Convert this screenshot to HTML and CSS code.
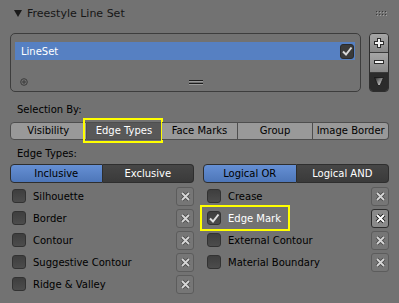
FILE: index.html
```html
<!DOCTYPE html>
<html lang="en">

<head>
    <meta charset="UTF-8">
    <title>Freestyle Line Set</title>
    <link rel="stylesheet" href="styles.css">
</head>

<body>
    <div class="panel">
        <div class="head">
            <svg class="caret" width="8" height="7" viewBox="0 0 8 7"><path d="M0 0H8L4 7Z" fill="#1a1a1a"/></svg>
            <span class="title">Freestyle Line Set</span>
            <svg class="grip" width="11" height="5" viewBox="0 0 11 5">
                <g fill="#3a3a3a"><rect x="0" y="0" width="1" height="1"/><rect x="3" y="0" width="1" height="1"/><rect x="6" y="0" width="1" height="1"/><rect x="9" y="0" width="1" height="1"/><rect x="0" y="3" width="1" height="1"/><rect x="3" y="3" width="1" height="1"/><rect x="6" y="3" width="1" height="1"/><rect x="9" y="3" width="1" height="1"/></g>
                <g fill="#a0a0a0"><rect x="1" y="1" width="1" height="1"/><rect x="4" y="1" width="1" height="1"/><rect x="7" y="1" width="1" height="1"/><rect x="10" y="1" width="1" height="1"/><rect x="1" y="4" width="1" height="1"/><rect x="4" y="4" width="1" height="1"/><rect x="7" y="4" width="1" height="1"/><rect x="10" y="4" width="1" height="1"/></g>
            </svg>
        </div>

        <div class="list-wrap">
            <div class="list">
                <div class="list-item">
                    <span>LineSet</span>
                    <span class="chk on">
                        <svg width="12" height="12" viewBox="0 0 12 12"><path d="M2 6.5L5 9.5L10.5 2.5" fill="none" stroke="#d8d8d8" stroke-width="2"/></svg>
                    </span>
                </div>
                <div class="list-foot">
                    <svg width="8" height="8" viewBox="0 0 8 8"><circle cx="4" cy="4" r="3.3" fill="none" stroke="#3c3c3c" stroke-width="1"/><path d="M4 2V6M2 4H6" stroke="#3c3c3c" stroke-width="1"/></svg>
                    <svg class="handle" width="14" height="6" viewBox="0 0 14 6"><path d="M0 1.5H14M0 4.5H14" stroke="#1e1e1e" stroke-width="1"/><path d="M0 2.5H14M0 5.5H14" stroke="#9a9a9a" stroke-width="1"/></svg>
                </div>
            </div>
            <div class="list-btns">
                <div class="lb">
                    <svg width="12" height="12" viewBox="0 0 12 12"><path d="M6 1V11M1 6H11" stroke="#2a2a2a" stroke-width="4"/><path d="M6 2V10M2 6H10" stroke="#f2f2f2" stroke-width="2"/></svg>
                </div>
                <div class="lb">
                    <svg width="12" height="6" viewBox="0 0 12 6"><path d="M1 3H11" stroke="#2a2a2a" stroke-width="4"/><path d="M2 3H10" stroke="#f2f2f2" stroke-width="2"/></svg>
                </div>
                <div class="lb dark">
                    <svg width="10" height="9" viewBox="0 0 10 9"><defs><linearGradient id="tri" x1="0" y1="0" x2="1" y2="1"><stop offset="0" stop-color="#222"/><stop offset="1" stop-color="#f0f0f0"/></linearGradient></defs><path d="M0.5 0.5H9.5L6 8.5H4Z" fill="url(#tri)" stroke="#151515" stroke-width="0.8"/></svg>
                </div>
            </div>
        </div>

        <div class="label">Selection By:</div>
        <div class="seg tabs">
            <span>Visibility</span>
            <span class="sel hl-tab">Edge Types</span>
            <span>Face Marks</span>
            <span>Group</span>
            <span>Image Border</span>
        </div>

        <div class="label">Edge Types:</div>
        <div class="cols">
            <div class="col">
                <div class="seg pair">
                    <span class="blue">Inclusive</span>
                    <span class="dark">Exclusive</span>
                </div>
                <div class="row"><span class="chk"></span><span class="txt">Silhouette</span><span class="x"><svg width="11" height="11" viewBox="0 0 11 11"><path d="M2 2L9 9M9 2L2 9" stroke="#4a4a4a" stroke-width="3.6"/><path d="M2 2L9 9M9 2L2 9" stroke="#d6d6d6" stroke-width="1.8"/></svg></span></div>
                <div class="row"><span class="chk"></span><span class="txt">Border</span><span class="x"><svg width="11" height="11" viewBox="0 0 11 11"><path d="M2 2L9 9M9 2L2 9" stroke="#4a4a4a" stroke-width="3.6"/><path d="M2 2L9 9M9 2L2 9" stroke="#d6d6d6" stroke-width="1.8"/></svg></span></div>
                <div class="row"><span class="chk"></span><span class="txt">Contour</span><span class="x"><svg width="11" height="11" viewBox="0 0 11 11"><path d="M2 2L9 9M9 2L2 9" stroke="#4a4a4a" stroke-width="3.6"/><path d="M2 2L9 9M9 2L2 9" stroke="#d6d6d6" stroke-width="1.8"/></svg></span></div>
                <div class="row"><span class="chk"></span><span class="txt">Suggestive Contour</span><span class="x"><svg width="11" height="11" viewBox="0 0 11 11"><path d="M2 2L9 9M9 2L2 9" stroke="#4a4a4a" stroke-width="3.6"/><path d="M2 2L9 9M9 2L2 9" stroke="#d6d6d6" stroke-width="1.8"/></svg></span></div>
                <div class="row"><span class="chk"></span><span class="txt">Ridge &amp; Valley</span><span class="x"><svg width="11" height="11" viewBox="0 0 11 11"><path d="M2 2L9 9M9 2L2 9" stroke="#4a4a4a" stroke-width="3.6"/><path d="M2 2L9 9M9 2L2 9" stroke="#d6d6d6" stroke-width="1.8"/></svg></span></div>
            </div>
            <div class="col col-r">
                <div class="seg pair">
                    <span class="blue">Logical OR</span>
                    <span class="dark">Logical AND</span>
                </div>
                <div class="row"><span class="chk"></span><span class="txt">Crease</span><span class="x"><svg width="11" height="11" viewBox="0 0 11 11"><path d="M2 2L9 9M9 2L2 9" stroke="#4a4a4a" stroke-width="3.6"/><path d="M2 2L9 9M9 2L2 9" stroke="#d6d6d6" stroke-width="1.8"/></svg></span></div>
                <div class="row">
                    <span class="hl">
                        <span class="chk on"><svg width="12" height="12" viewBox="0 0 12 12"><path d="M2 6.5L5 9.5L10.5 2.5" fill="none" stroke="#e0e0e0" stroke-width="2"/></svg></span>
                        <span class="txt white">Edge Mark</span>
                    </span>
                    <span class="x active"><svg width="11" height="11" viewBox="0 0 11 11"><path d="M2 2L9 9M9 2L2 9" stroke="#111" stroke-width="3.8"/><path d="M2 2L9 9M9 2L2 9" stroke="#fff" stroke-width="2"/></svg></span>
                </div>
                <div class="row"><span class="chk"></span><span class="txt">External Contour</span><span class="x"><svg width="11" height="11" viewBox="0 0 11 11"><path d="M2 2L9 9M9 2L2 9" stroke="#4a4a4a" stroke-width="3.6"/><path d="M2 2L9 9M9 2L2 9" stroke="#d6d6d6" stroke-width="1.8"/></svg></span></div>
                <div class="row"><span class="chk"></span><span class="txt">Material Boundary</span><span class="x"><svg width="11" height="11" viewBox="0 0 11 11"><path d="M2 2L9 9M9 2L2 9" stroke="#4a4a4a" stroke-width="3.6"/><path d="M2 2L9 9M9 2L2 9" stroke="#d6d6d6" stroke-width="1.8"/></svg></span></div>
            </div>
        </div>
    </div>
</body>

</html>
```

FILE: styles.css
```css
body {
    margin: 0;
    background: #727272;
    font-family: "DejaVu Sans", sans-serif;
    font-size: 10px;
    color: #000;
}

.panel {
    width: 379px;
    padding: 0 10px;
}

/* header */
.head {
    height: 27px;
    display: flex;
    align-items: center;
}

.caret {
    margin-left: 4px;
}

.title {
    margin-left: 5px;
    font-size: 11px;
    color: #161616;
}

.grip {
    margin-left: auto;
    margin-right: 2px;
    margin-top: -1px;
}

/* line set list */
.list-wrap {
    display: flex;
    gap: 8px;
    margin-top: 6px;
}

.list {
    flex: 1;
    height: 59px;
    box-sizing: border-box;
    border: 1px solid #3d3d3d;
    border-radius: 5px;
    padding: 8px 5px 0 4px;
    display: flex;
    flex-direction: column;
}

.list-item {
    height: 18px;
    background: #5680c2;
    color: #fff;
    display: flex;
    align-items: center;
    justify-content: space-between;
    padding: 0 1px 0 6px;
}

.list-foot {
    flex: 1;
    display: flex;
    align-items: flex-end;
    padding: 0 0 5px 5px;
}

.handle {
    margin-left: 161px;
    margin-bottom: 1px;
}

.list-btns {
    width: 20px;
    height: 59px;
    box-sizing: border-box;
    border: 1px solid #2e2e2e;
    border-radius: 4px;
    overflow: hidden;
    display: flex;
    flex-direction: column;
}

.lb {
    flex: 1;
    display: flex;
    align-items: center;
    justify-content: center;
    background: linear-gradient(#a6a6a6, #888);
    border-bottom: 1px solid #3a3a3a;
}

.lb.dark {
    background: #2b2b2b;
    border-bottom: none;
}

/* labels and segmented buttons */
.label {
    height: 17px;
    line-height: 17px;
    padding-left: 7px;
    margin-top: 9px;
}

.label + .seg {
    margin-top: 4px;
}

.tabs + .label {
    margin-top: 5px;
}

.seg {
    display: flex;
}

.seg span {
    flex: 1;
    box-sizing: border-box;
    height: 18px;
    line-height: 16px;
    text-align: center;
    background: #999;
    border: 1px solid #4e4e4e;
    border-left: none;
    position: relative;
}

.seg span:first-child {
    border-left: 1px solid #4e4e4e;
    border-radius: 4px 0 0 4px;
}

.seg span:last-child {
    border-radius: 0 4px 4px 0;
}

.seg .sel {
    background: #585858;
    color: #fff;
}

.hl-tab::after {
    content: "";
    position: absolute;
    top: -5px;
    bottom: -4px;
    left: -4px;
    right: -2px;
    border: 2px solid #ffff00;
}

.cols {
    display: grid;
    grid-template-columns: 184px 1fr;
    gap: 9px;
    margin-top: 2px;
}

.pair span {
    height: 19px;
    line-height: 17px;
    border-color: #2e2e2e;
}

.pair span:first-child {
    border-left-color: #2e2e2e;
}

.pair .blue {
    background: linear-gradient(#6690d4, #4d76b9);
}

.pair .dark {
    background: linear-gradient(#464646, #3a3a3a);
    color: #fff;
}

/* option rows */
.row {
    height: 22px;
    display: flex;
    align-items: center;
    padding-left: 2px;
}

.pair + .row {
    margin-top: 2px;
}

.col-r .row {
    padding-left: 4px;
}

.chk {
    width: 14px;
    height: 14px;
    box-sizing: border-box;
    border: 1px solid #323232;
    border-radius: 3px;
    background: linear-gradient(#3e3e3e, #4c4c4c);
    display: flex;
    align-items: center;
    justify-content: center;
    flex-shrink: 0;
}

.list-item .chk {
    height: 15px;
    background: #3a3a3a;
    border-color: #2a2a2a;
}

.txt {
    margin-left: 7px;
}

.txt.white {
    color: #fff;
}

.hl {
    display: flex;
    align-items: center;
    position: relative;
}

.hl::after {
    content: "";
    position: absolute;
    top: -6px;
    bottom: -6px;
    left: -7px;
    right: -9px;
    border: 2px solid #ffff00;
}

.x {
    margin-left: auto;
    width: 18px;
    height: 19px;
    box-sizing: border-box;
    border: 1px solid #5c5c5c;
    border-radius: 3px;
    background: #767676;
    display: flex;
    align-items: center;
    justify-content: center;
}

.x.active {
    border-color: #2e2e2e;
    background: #8a8a8a;
}
```
